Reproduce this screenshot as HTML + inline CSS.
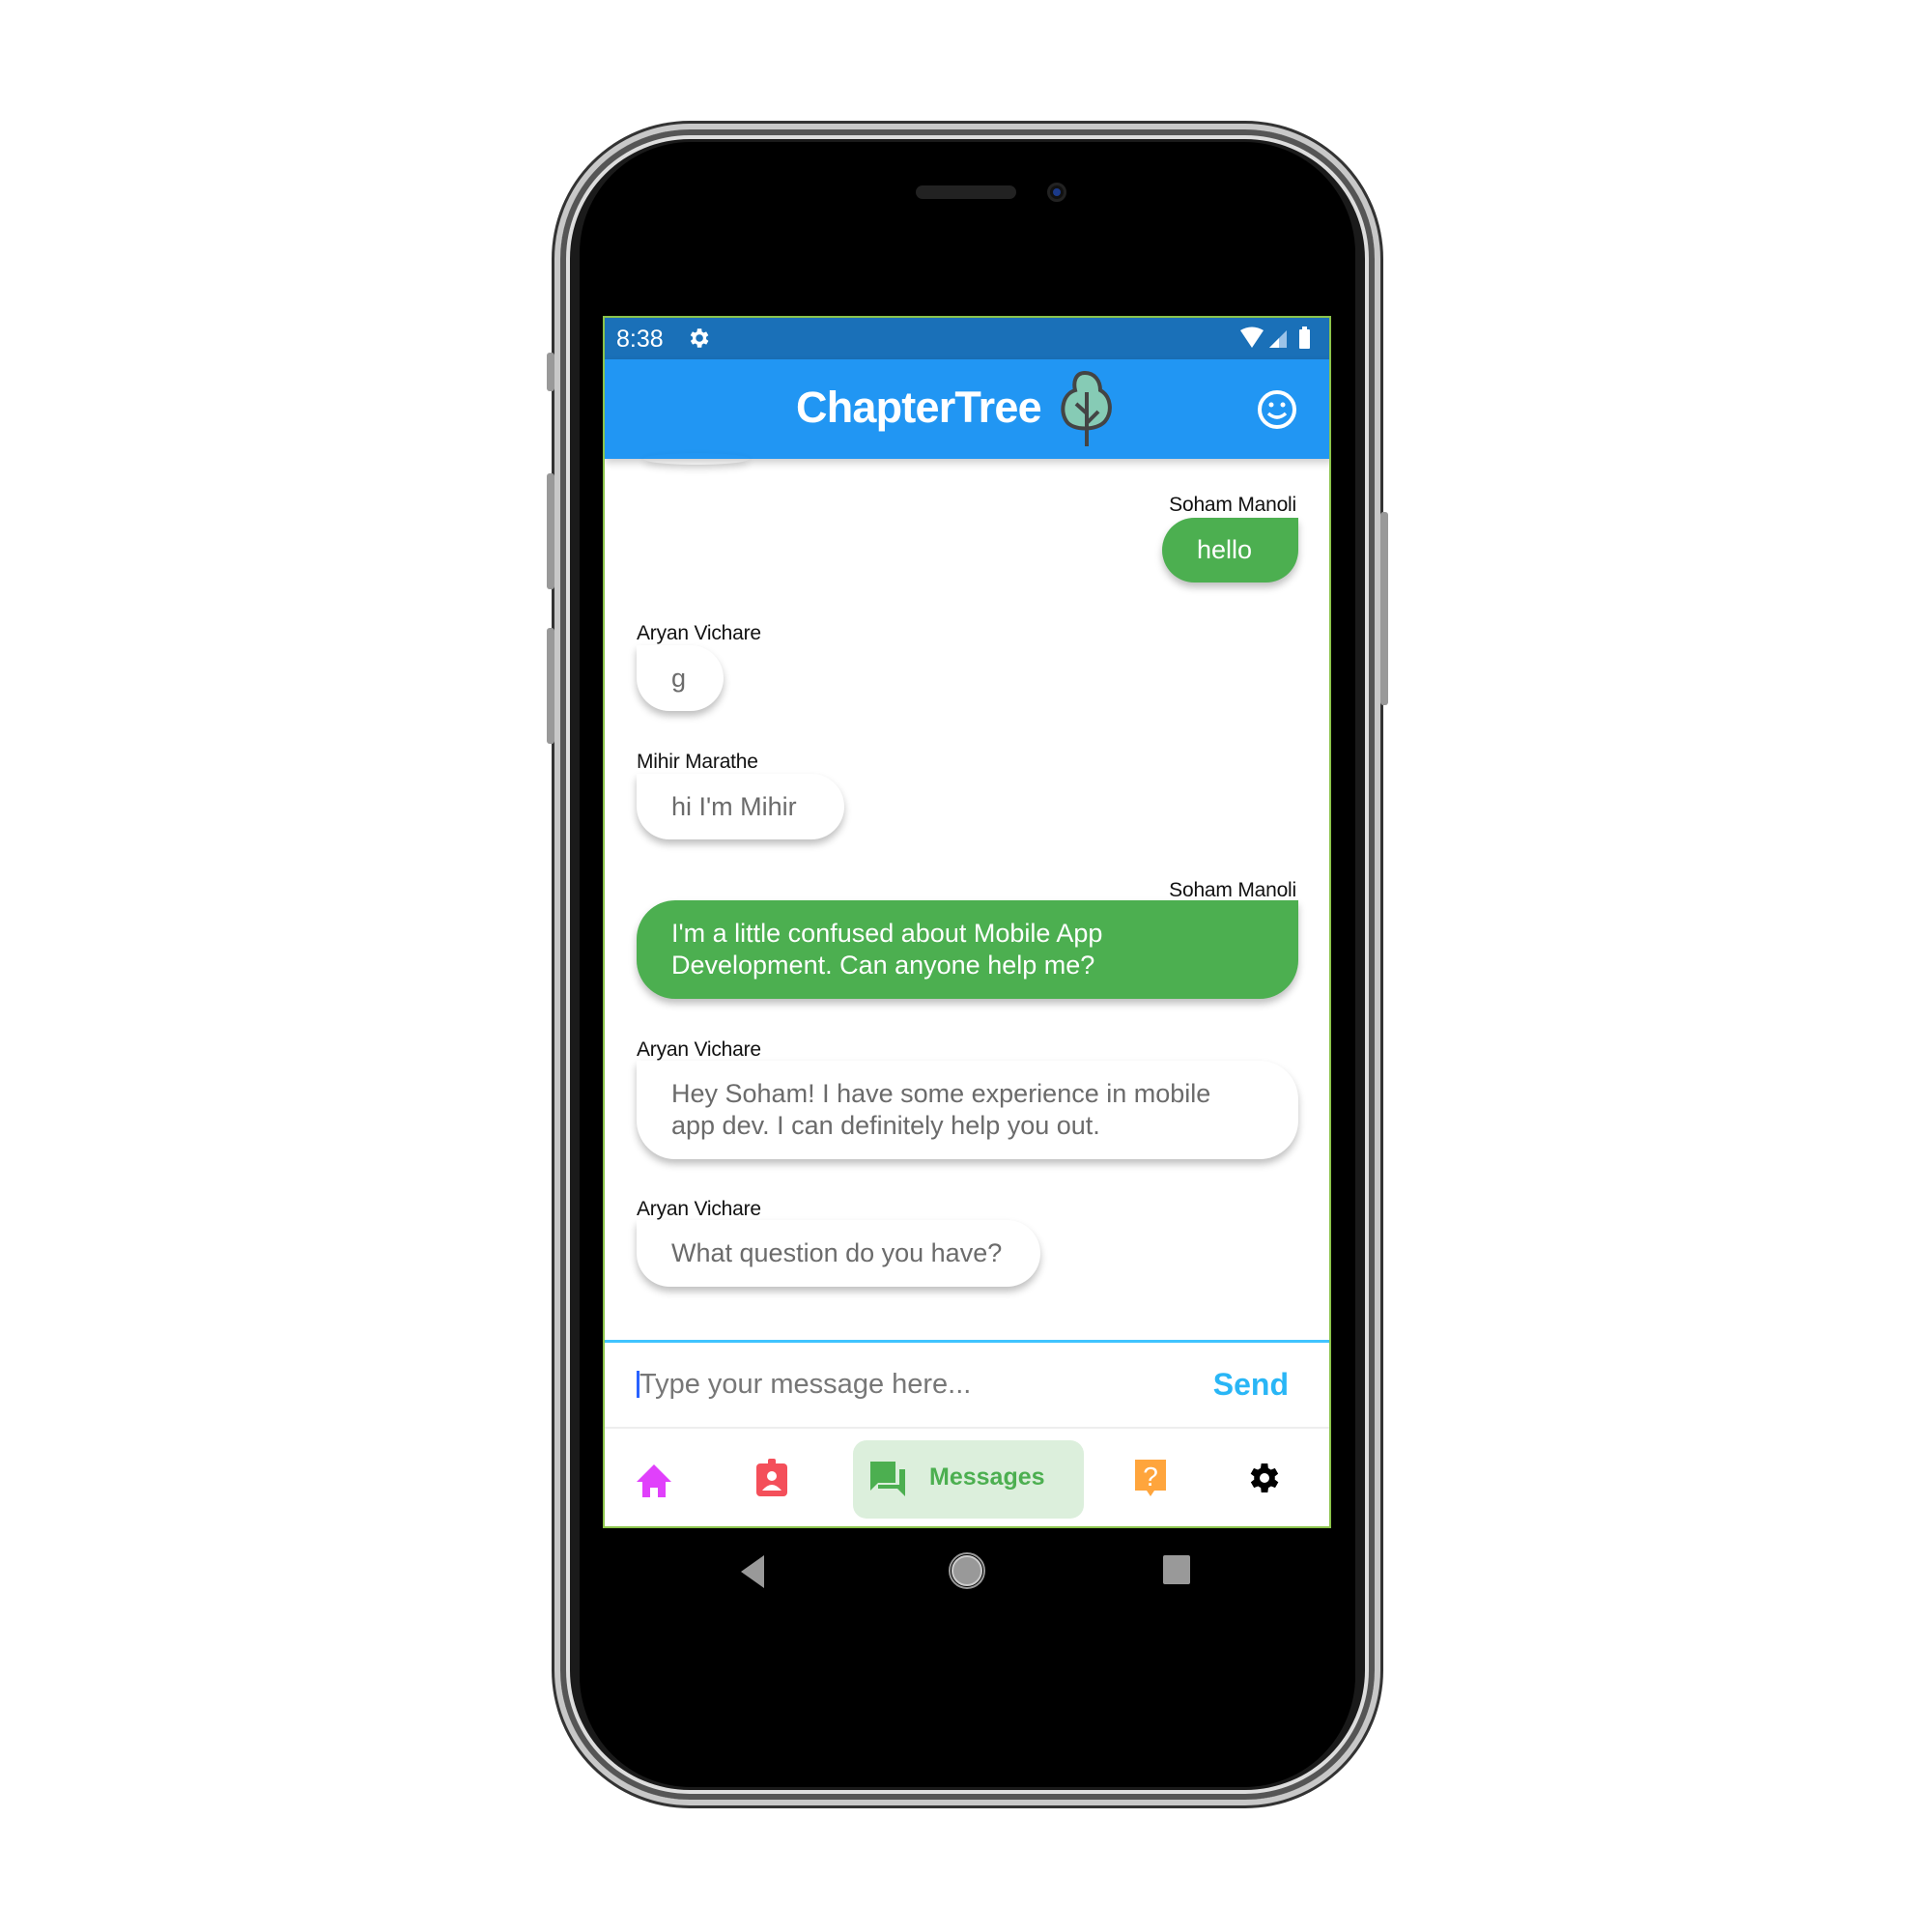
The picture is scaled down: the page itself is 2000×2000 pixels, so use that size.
<!DOCTYPE html>
<html><head><meta charset="utf-8"><style>
*{margin:0;padding:0;box-sizing:border-box}
body{width:2000px;height:2000px;background:#fff;position:relative;overflow:hidden;font-family:"Liberation Sans",sans-serif}
.abs{position:absolute}
.phone{left:574px;top:128px;width:855px;height:1741px;border-radius:140px;background:#1a1a1a;border:6px solid #c8c8c8;box-shadow:0 0 0 3px #333, inset 0 0 0 6px #555, inset 0 0 0 10px #ddd}
.inner{left:600px;top:147px;width:803px;height:1703px;border-radius:115px;background:#000}
.screen{left:624px;top:327px;width:754px;height:1255px;background:#fff;border:2px solid #8bc34a;overflow:hidden}
.name{font-size:21px;color:#111;letter-spacing:-0.2px}
.b{font-size:27px;letter-spacing:0px;line-height:33px;padding:0 36px;display:flex;align-items:center;box-shadow:0 5px 8px rgba(0,0,0,.25)}
.g{background:#4caf50;color:#fff;border-radius:40px 0 40px 40px}
.w{background:#fff;color:#6b6b6b;border-radius:0 40px 40px 40px}
</style></head><body>
<div class="abs phone"></div>
<div class="abs inner"></div>
<div class="abs" style="left:948px;top:192px;width:104px;height:14px;border-radius:7px;background:#222"></div>
<div class="abs" style="left:1084px;top:189px;width:20px;height:20px;border-radius:50%;background:#111;border:3px solid #222"><div style="margin:3px;width:8px;height:8px;border-radius:50%;background:#1b3a8a"></div></div>
<div class="abs" style="left:566px;top:365px;width:8px;height:40px;background:#999;border-radius:3px"></div>
<div class="abs" style="left:566px;top:490px;width:8px;height:120px;background:#999;border-radius:3px"></div>
<div class="abs" style="left:566px;top:650px;width:8px;height:120px;background:#999;border-radius:3px"></div>
<div class="abs" style="left:1429px;top:530px;width:8px;height:200px;background:#999;border-radius:3px"></div>

<div class="abs screen">
 <div class="abs" style="left:0;top:0;width:754px;height:43px;background:#1a70b8;color:#fff">
  <div class="abs" style="left:12px;top:8px;font-size:25px">8:38</div>
  <svg class="abs" style="left:84px;top:8px" width="26" height="26" viewBox="0 0 24 24"><path fill="#fff" d="M19.4 13a7.5 7.5 0 0 0 0-2l2.1-1.6-2-3.5-2.5 1a7 7 0 0 0-1.7-1L15 3h-4l-.4 2.9a7 7 0 0 0-1.7 1l-2.5-1-2 3.5L6.6 11a7.5 7.5 0 0 0 0 2l-2.1 1.6 2 3.5 2.5-1a7 7 0 0 0 1.7 1L11 21h4l.4-2.9a7 7 0 0 0 1.7-1l2.5 1 2-3.5zM13 15.5A3.5 3.5 0 1 1 13 8.5a3.5 3.5 0 0 1 0 7z"/></svg>
  <svg class="abs" style="left:656px;top:9px" width="90" height="26"><path d="M2 4 Q14 -3 26 4 L14 22Z" fill="#fff"/><path d="M32 22 L50 4 L50 22Z" fill="#9cc3e8"/><path d="M32 22 L42 12 L42 22Z" fill="#fff"/><rect x="63" y="3" width="11" height="20" rx="1" fill="#fff"/><rect x="66" y="0" width="5" height="4" fill="#fff"/></svg>
 </div>
 <div class="abs" style="left:0;top:43px;width:754px;height:103px;background:#2196f3;box-shadow:0 4px 8px rgba(0,0,0,.2)">
  <div class="abs" style="left:198px;top:24px;font-size:45px;font-weight:bold;color:#fff;letter-spacing:-0.8px">ChapterTree</div>
  <svg class="abs" style="left:466px;top:10px" width="66" height="84"><path d="M31 4 C21 4 19 14 21 22 C8 26 5 44 12 54 C18 64 44 64 52 54 C60 44 58 28 47 22 C47 12 41 4 31 4Z" fill="#86cbb5" stroke="#444" stroke-width="4"/><path d="M33 24 V80 M33 46 L22 36 M33 56 L45 44" stroke="#444" stroke-width="4" fill="none"/></svg>
  <svg class="abs" style="left:674px;top:30px" width="44" height="44"><circle cx="22" cy="22" r="18" fill="none" stroke="#fff" stroke-width="4"/><circle cx="16" cy="17" r="2.5" fill="#fff"/><circle cx="28" cy="17" r="2.5" fill="#fff"/><path d="M13 26 Q22 34 31 26" stroke="#fff" stroke-width="3.5" fill="none"/></svg>
 </div>
 <div class="abs" style="left:40px;top:140px;width:110px;height:12px;border-radius:50%;box-shadow:0 4px 8px rgba(0,0,0,.15)"></div>

 <div class="abs name" style="right:34px;top:182px">Soham Manoli</div>
 <div class="abs b g" style="left:577px;top:207px;width:141px;height:67px">hello</div>
 <div class="abs name" style="left:33px;top:315px">Aryan Vichare</div>
 <div class="abs b w" style="left:33px;top:339px;width:90px;height:68px">g</div>
 <div class="abs name" style="left:33px;top:448px">Mihir Marathe</div>
 <div class="abs b w" style="left:33px;top:472px;width:215px;height:68px">hi I'm Mihir</div>
 <div class="abs name" style="right:34px;top:581px">Soham Manoli</div>
 <div class="abs b g" style="left:33px;top:603px;width:685px;height:102px">I'm a little confused about Mobile App<br>Development. Can anyone help me?</div>
 <div class="abs name" style="left:33px;top:746px">Aryan Vichare</div>
 <div class="abs b w" style="left:33px;top:769px;width:685px;height:102px">Hey Soham! I have some experience in mobile<br>app dev. I can definitely help you out.</div>
 <div class="abs name" style="left:33px;top:911px">Aryan Vichare</div>
 <div class="abs b w" style="left:33px;top:934px;width:418px;height:69px">What question do you have?</div>

 <div class="abs" style="left:0;top:1058px;width:754px;height:3px;background:#40c4ff"></div>
 <div class="abs" style="left:33px;top:1090px;width:3px;height:28px;background:#2962ff"></div>
 <div class="abs" style="left:36px;top:1088px;font-size:29px;color:#777">Type your message here...</div>
 <div class="abs" style="right:42px;top:1086px;font-size:32px;font-weight:bold;color:#29b6f6">Send</div>
 <div class="abs" style="left:0;top:1148px;width:754px;height:2px;background:#eee"></div>

 <svg class="abs" style="left:31px;top:1185px" width="40" height="38"><path d="M20 2 L38 20 H32 V36 H24 V26 H16 V36 H8 V20 H2Z" fill="#e040fb"/></svg>
 <svg class="abs" style="left:155px;top:1180px" width="36" height="42"><rect x="2" y="6" width="32" height="34" rx="4" fill="#f44f5a"/><rect x="14" y="1" width="8" height="8" rx="2" fill="#f44f5a"/><circle cx="18" cy="19" r="5" fill="#fff"/><path d="M8 34 Q18 22 28 34Z" fill="#fff"/></svg>
 <div class="abs" style="left:257px;top:1162px;width:239px;height:81px;border-radius:14px;background:#dcefdc"></div>
 <svg class="abs" style="left:273px;top:1182px" width="42" height="40"><path d="M2 2 H28 V24 H10 L2 32Z" fill="#4caf50"/><path d="M32 10 H38 V38 L30 30 H10 V26 H32Z" fill="#4caf50"/></svg>
 <div class="abs" style="left:336px;top:1186px;font-size:25px;font-weight:bold;color:#4caf50">Messages</div>
 <svg class="abs" style="left:547px;top:1180px" width="36" height="44"><path d="M2 2 H34 V34 H22 L18 40 L14 34 H2Z" fill="#ffa53c" /><text x="18" y="29" font-size="28" fill="#fff" text-anchor="middle" font-family="Liberation Sans">?</text></svg>
 <svg class="abs" style="left:663px;top:1181px" width="40" height="40" viewBox="0 0 24 24"><path fill="#000" d="M19.4 13a7.5 7.5 0 0 0 0-2l2.1-1.6-2-3.5-2.5 1a7 7 0 0 0-1.7-1L15 3h-4l-.4 2.9a7 7 0 0 0-1.7 1l-2.5-1-2 3.5L6.6 11a7.5 7.5 0 0 0 0 2l-2.1 1.6 2 3.5 2.5-1a7 7 0 0 0 1.7 1L11 21h4l.4-2.9a7 7 0 0 0 1.7-1l2.5 1 2-3.5zM13 15a3 3 0 1 1 0-6 3 3 0 0 1 0 6z" transform="translate(-1 0)"/></svg>
</div>

<svg class="abs" style="left:760px;top:1605px" width="480" height="44"><path d="M7 22 L31 5 V39Z" fill="#999"/><circle cx="241" cy="21" r="15" fill="#999" stroke="#ccc" stroke-width="2"/><circle cx="241" cy="21" r="18" fill="none" stroke="#999" stroke-width="2"/><rect x="444" y="5" width="28" height="30" rx="2" fill="#999"/></svg>
</body></html>
